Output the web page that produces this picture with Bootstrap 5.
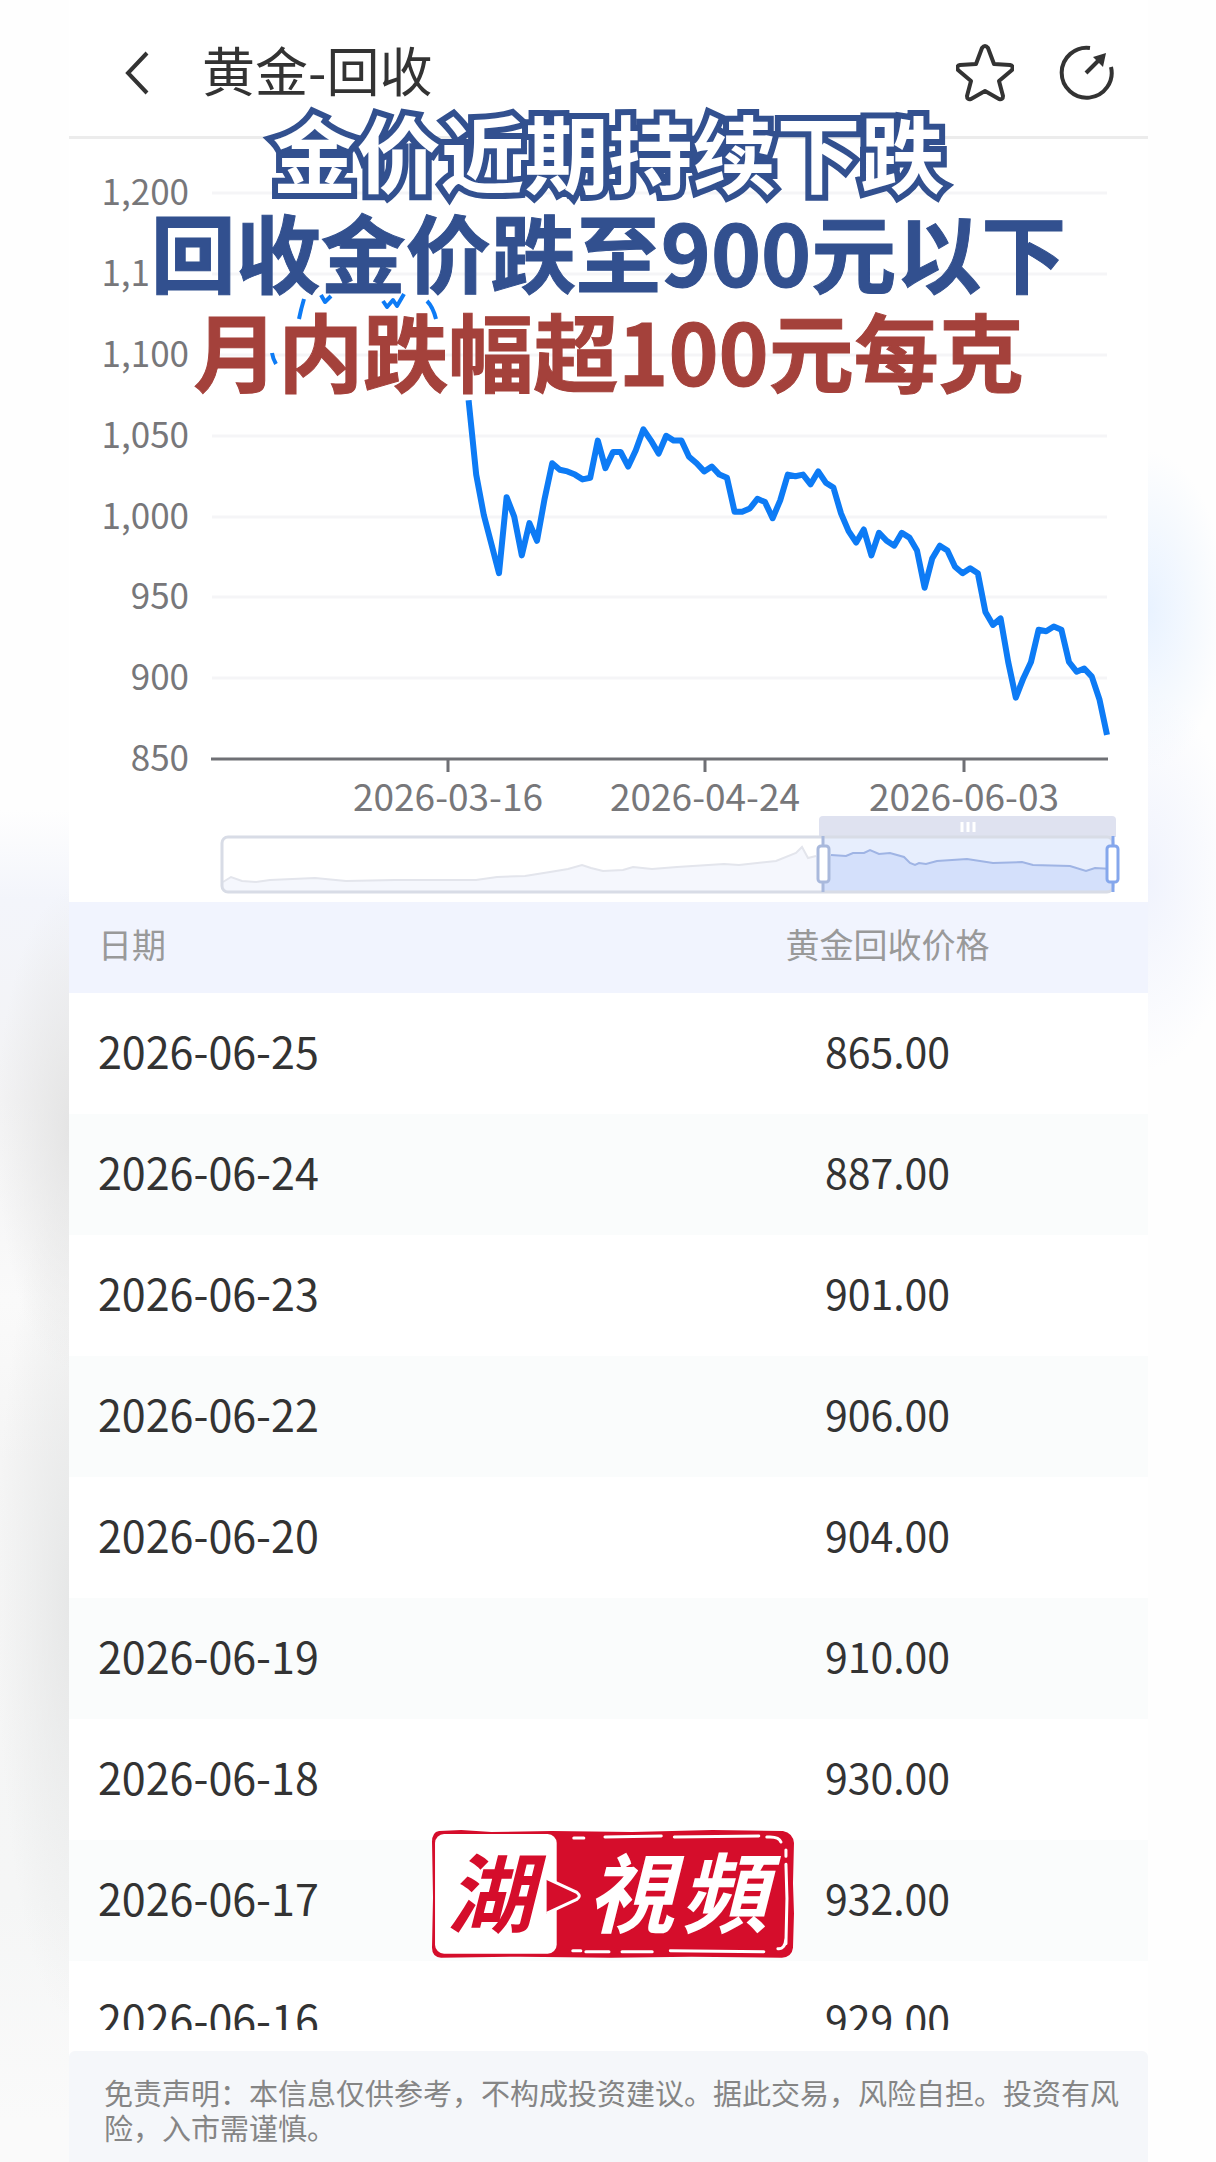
<!DOCTYPE html>
<html lang="zh-CN">
<head>
    <meta charset="UTF-8">
    <meta name="viewport" content="width=device-width, initial-scale=1.0">
    <title>黄金-回收</title>
    <link href="https://cdn.jsdelivr.net/npm/bootstrap@5.3.0/dist/css/bootstrap.min.css" rel="stylesheet">
    <style>
        body {
            font-family: "Noto Sans CJK SC", sans-serif;
            color: #333;
            background-color: #fefefe;
            background-image:
                radial-gradient(ellipse 75px 240px at 72px 1130px, #e4e4e4, transparent),
                radial-gradient(ellipse 75px 420px at 72px 1600px, #e6e7e7, transparent),
                radial-gradient(ellipse 80px 160px at calc(100% - 70px) 610px, #e8f2ff, transparent),
                radial-gradient(ellipse 90px 190px at calc(100% - 70px) 880px, #f0f3fd, transparent),
                linear-gradient(transparent 810px, #f3f5fb 900px, #f3f3f4 1100px, #fafafa 1300px, #f5f5f5 1460px, #f5f6f6 1900px, #fafafa 2120px);
            background-repeat: no-repeat;
            background-size: auto, auto, auto, auto, 69px 100%;
        }
        .phone-page {
            margin: 0 68px 0 69px;
            background: #fff;
        }
        .top-bar {
            height: 139px;
            padding: 10px 34px 0 54px;
            border-bottom: 3px solid #ececec;
        }
        .top-bar h1 {
            padding: 0 0 8px 3px;
            font-size: 53px;
            line-height: 60px;
            font-weight: 400;
        }
        .icon-btn {
            border: 0;
            background: none;
            padding: 0;
            line-height: 0;
            color: #333;
        }
        .star-btn {
            margin-right: 44px;
        }
        .price-chart text {
            font-size: 35px;
            fill: #77777a;
        }
        .price-chart .axis-dates text {
            font-size: 37px;
        }
        .price-chart .grid-line {
            stroke: #f5f5f7;
            stroke-width: 3;
        }
        .caption-box {
            top: 101px;
            font-size: 85px;
            line-height: 99px;
            font-weight: 700;
            color: #32508f;
            -webkit-text-stroke: 1px currentColor;
        }
        .caption-outline {
            font-size: 84px;
            color: #fff;
            -webkit-text-stroke: 12px #32508f;
            paint-order: stroke fill;
        }
        .caption-red {
            color: #a4413b;
        }
        .price-scroll {
            height: 1128px;
            overflow: hidden;
        }
        .price-table {
            table-layout: fixed;
            font-size: 43px;
            line-height: 60px;
        }
        .price-table th {
            height: 91px;
            font-size: 34px;
            line-height: 50px;
            font-weight: 400;
            color: #999;
            background: #f1f4fe;
        }
        .price-table td {
            height: 121px;
            color: #333;
        }
        .price-table th,
        .price-table td {
            padding: 0 0 8px;
            border: 0;
            vertical-align: middle;
        }
        .price-table tr > :first-child {
            width: 52%;
            padding-left: 29px;
        }
        .price-table tr > :last-child {
            padding-right: 3px;
            text-align: center;
        }
        .price-table td:last-child {
            font-size: 41px;
        }
        .price-table tbody tr:nth-child(even) td {
            background: #fafcfc;
        }
        .disclaimer {
            min-height: 111px;
            margin-top: 21px;
            padding: 24px 20px 17px 35px;
            font-size: 29px;
            line-height: 35px;
            color: #858585;
            background: #f5f7fa;
            border-radius: 6px 6px 0 0;
        }
        .seal-logo {
            bottom: 203px;
            left: 362px;
            width: 364px;
        }
        .seal-logo text {
            font-weight: 700;
            font-size: 86px;
            font-style: italic;
        }
    </style>
</head>
<body>
    <main class="phone-page position-relative">
        <!-- Top bar -->
        <header class="top-bar d-flex align-items-center">
            <button class="icon-btn" type="button" aria-label="返回">
                <svg width="28" height="46" viewBox="0 0 28 46" fill="none" stroke="currentColor" stroke-width="4"><path d="M24 3 5 23l19 20"/></svg>
            </button>
            <h1 class="mb-0 ms-5 me-auto">黄金-回收</h1>
            <button class="icon-btn star-btn" type="button" aria-label="收藏">
                <svg width="58" height="58" viewBox="0 0 58 58" fill="none" stroke="currentColor" stroke-width="4" stroke-linejoin="round"><path d="M26 4q3-4 6 0l6 16 16 1q4 1 2 5L43 37l4 15q0 4-4 3L29 47 15 55q-4 1-4-3l4-15L2 26q-2-4 2-5l16-1z"/></svg>
            </button>
            <button class="icon-btn" type="button" aria-label="分享">
                <svg width="56" height="56" viewBox="0 0 56 56" fill="none" stroke="currentColor" stroke-width="4"><path d="M32 3A25 25 0 1 0 53 22"/><path d="M28 28 42 14"/><path d="m35 12 13-4-3 14z" fill="currentColor" stroke="none"/></svg>
            </button>
        </header>

        <!-- Price chart and its zoom slider -->
        <svg class="price-chart d-block w-100" viewBox="0 0 1079 763" role="img" aria-label="黄金回收价格走势">
            <g id="grid"></g>
            <g fill="none" stroke="#0d7bf5" stroke-width="6" stroke-linejoin="round">
                <polyline id="price-line"/>
                <path d="M230 180q2-10 5-20M252 156l4 7 6-6M314 162l4 6 6-7 4 6 7-12M358 162q6 6 9 18M203 214q1 6 4 11" stroke-width="4"/>
            </g>
            <path d="M142 620H1039M379 620v13M636 620v13M895 620v13" fill="none" stroke="#6f7075" stroke-width="3"/>
            <g class="axis-dates" text-anchor="middle">
                <text x="379" y="672">2026-03-16</text>
                <text x="636" y="672">2026-04-24</text>
                <text x="895" y="672">2026-06-03</text>
            </g>
            <!-- slider -->
            <path d="M154 743 162 738 173 742 187 743 201 741 246 739 277 742 326 741 407 741 428 738 456 737 481 733 499 730 513 726 522 729 534 732 554 731 564 728 583 730 608 728 655 725 670 726 707 722 727 714 733 708 739 719 747 717 754 717V753H154z" fill="#f5f7fd"/>
            <path d="M154 743 162 738 173 742 187 743 201 741 246 739 277 742 326 741 407 741 428 738 456 737 481 733 499 730 513 726 522 729 534 732 554 731 564 728 583 730 608 728 655 725 670 726 707 722 727 714 733 708 739 719 747 717" fill="none" stroke="#e3e5ec" stroke-width="2"/>
            <rect x="754" y="699" width="290" height="54" fill="#e7eefd"/>
            <path d="M754 717 762 716 777 717 784 714 795 714 801 711 810 715 821 714 835 718 841 724 846 726 850 724 857 725 868 722 898 720 924 724 953 723 964 726 1001 727 1017 732 1026 729 1044 730V753H754z" fill="#d4e0fb"/>
            <path d="M762 716 777 717 784 714 795 714 801 711 810 715 821 714 835 718 841 724 846 726 850 724 857 725 868 722 898 720 924 724 953 723 964 726 1001 727 1017 732 1026 729 1044 730" fill="none" stroke="#9fb4e4" stroke-width="2"/>
            <path d="M750 698v-17q0-4 4-4h289q4 0 4 4v17z" fill="#dfe2f0"/>
            <path d="M893 683v10M899 683v10M905 683v10" stroke="#fff" stroke-width="3"/>
            <rect x="153" y="698" width="891" height="55" rx="6" fill="none" stroke="#d8dce6" stroke-width="3"/>
            <path d="M754 697v56" stroke="#a9b9dc" stroke-width="3"/>
            <path d="M1044 697v56" stroke="#85a7ec" stroke-width="3"/>
            <rect x="749" y="707" width="11" height="36" rx="3" fill="#fff" stroke="#a9b9dc" stroke-width="3"/>
            <rect x="1038" y="707" width="11" height="36" rx="3" fill="#fff" stroke="#85a7ec" stroke-width="3"/>
        </svg>

        <!-- Price list -->
        <div class="price-scroll">
            <table class="table price-table mb-0">
                <thead>
                    <tr><th scope="col">日期</th><th scope="col">黄金回收价格</th></tr>
                </thead>
                <tbody>
                    <tr><td>2026-06-25</td><td>865.00</td></tr>
                    <tr><td>2026-06-24</td><td>887.00</td></tr>
                    <tr><td>2026-06-23</td><td>901.00</td></tr>
                    <tr><td>2026-06-22</td><td>906.00</td></tr>
                    <tr><td>2026-06-20</td><td>904.00</td></tr>
                    <tr><td>2026-06-19</td><td>910.00</td></tr>
                    <tr><td>2026-06-18</td><td>930.00</td></tr>
                    <tr><td>2026-06-17</td><td>932.00</td></tr>
                    <tr><td>2026-06-16</td><td>929.00</td></tr>
                </tbody>
            </table>
        </div>

        <footer class="disclaimer">免责声明：本信息仅供参考，不构成投资建议。据此交易，风险自担。投资有风险，入市需谨慎。</footer>

        <!-- Video captions -->
        <div class="caption-box position-absolute start-0 w-100 text-center text-nowrap">
            <div class="caption-outline">金价近期持续下跌</div>
            <div>回收金价跌至900元以下</div>
            <div class="caption-red">月内跌幅超100元每克</div>
        </div>

        <!-- Channel seal -->
        <svg class="seal-logo position-absolute" viewBox="0 0 362 128" role="img" aria-label="湖視頻">
            <path d="M8 1 30 0 60 2 120 1 200 2 280 0 350 1q10 2 11 12l-1 40 1 30-1 34q-1 9-11 10l-90-1-80 1-90-1-79 1q-9-1-9-10l1-50-1-55Q1 2 8 1z" fill="#d50d2b"/>
            <rect x="4" y="4" width="121" height="119" rx="9" fill="#fff"/>
            <path d="M115 49v34l31-15q4-3 0-6z" fill="#d50d2b"/>
            <path d="M115 48 145 62q5 4 0 7L115 83" fill="none" stroke="#fff" stroke-width="3"/>
            <g fill="none" stroke="#fff" stroke-width="3" stroke-linecap="round">
                <path d="M142 8h10M173 7 229 6M242 7l84-1M334 7q12-1 14 5M353 20v6M353 34l1 34-1 45M353 108q-1 11-8 10M141 120h8M154 121h23M190 121h30M238 120l93 1"/>
            </g>
            <text x="16" y="95" fill="#d50d2b">湖</text>
            <text x="156" y="95" fill="#fff">視</text>
            <text x="248" y="95" fill="#fff">頻</text>
        </svg>
    </main>

    <script src="https://cdn.jsdelivr.net/npm/bootstrap@5.3.0/dist/js/bootstrap.bundle.min.js"></script>
    <script>
        // daily prices, oldest first
        const prices = [1072, 1026, 1001, 983, 965, 1012, 1000, 976, 996, 985, 1011, 1033, 1029, 1028, 1026, 1023, 1024,
            1047, 1030, 1040, 1040, 1031, 1041, 1054, 1047, 1039, 1050, 1047, 1047, 1037, 1033, 1028, 1031, 1026, 1024,
            1003, 1003, 1005, 1011, 1009, 999, 1010, 1026, 1025, 1026, 1020, 1028, 1021, 1018, 1002, 991, 984, 992, 976,
            990, 985, 982, 990, 987, 979, 956, 974, 982, 979, 969, 965, 968, 965, 941, 933, 937, 910, 888, 900, 910,
            930, 929, 932, 930, 910, 904, 906, 901, 887, 865];
        const toY = price => 620 - (price - 850) * 1.616;
        const step = 7.6;

        document.getElementById('price-line').setAttribute('points', prices.map((price, i) =>
            `${(1038 - (prices.length - 1 - i) * step).toFixed(1)},${toY(price).toFixed(1)}`).join(' '));

        // the 1,150 label is cut off where the caption starts
        const labels = ['850', '900', '950', '1,000', '1,050', '1,100', '1,1', '1,200'];
        document.getElementById('grid').innerHTML = labels.map((label, i) => {
            const y = Math.round(toY(850 + i * 50));
            const line = i ? `<path class="grid-line" d="M143 ${y}H1038"/>` : '';
            const x = label === '1,1' ? 81 : 120;
            return `${line}<text x="${x}" y="${y + 12}" text-anchor="end">${label}</text>`;
        }).join('');
    </script>
</body>
</html>
